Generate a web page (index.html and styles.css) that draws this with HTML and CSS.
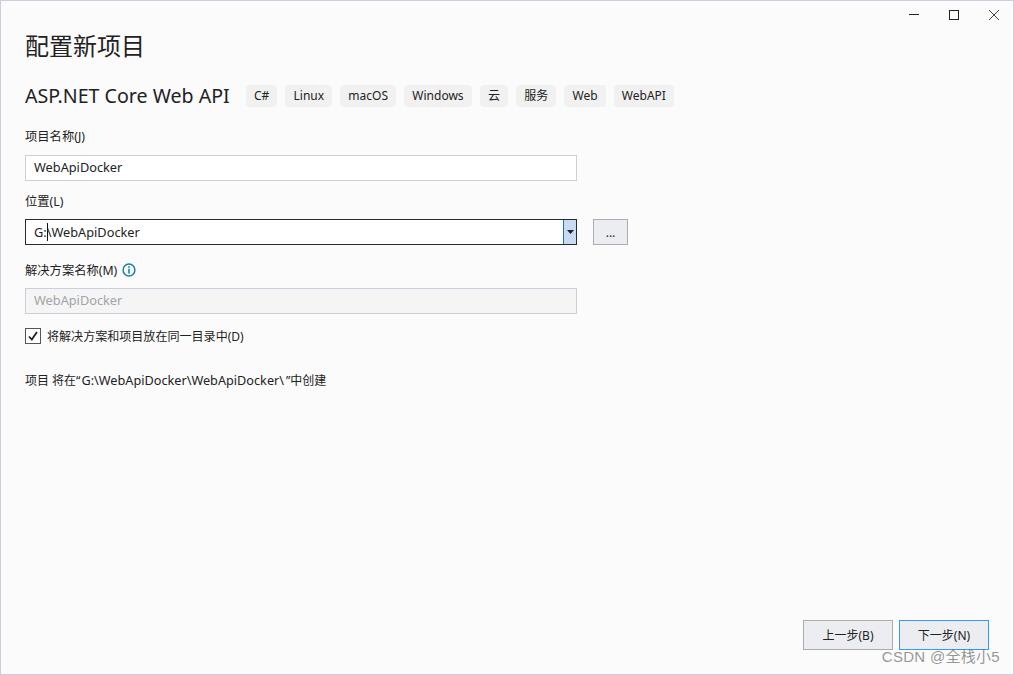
FILE: index.html
```html
<!DOCTYPE html>
<html lang="zh-CN">
<head>
    <meta charset="UTF-8">
    <meta name="viewport" content="width=device-width, initial-scale=1.0">
    <title>配置新项目</title>
    <link rel="stylesheet" href="styles.css">
</head>
<body>

    <div class="window">
        <div class="title-bar">
            <svg class="win-btn" width="40" height="30" viewBox="0 0 40 30"><path d="M16 13.500h10" stroke="#222" fill="none"/></svg>
            <svg class="win-btn" width="40" height="30" viewBox="0 0 40 30"><rect x="16.500" y="9.500" width="9" height="9" stroke="#222" fill="none"/></svg>
            <svg class="win-btn" width="40" height="30" viewBox="0 0 40 30"><path d="M16 9l10 10M26 9l-10 10" stroke="#444" fill="none"/></svg>
        </div>

        <h1>配置新项目</h1>

        <div class="template-row">
            <h2>ASP.NET Core Web API</h2>
            <ul class="tags">
                <li>C#</li>
                <li>Linux</li>
                <li>macOS</li>
                <li>Windows</li>
                <li>云</li>
                <li>服务</li>
                <li>Web</li>
                <li>WebAPI</li>
            </ul>
        </div>

        <label class="field-label">项目名称(J)</label>
        <div class="text-box">WebApiDocker</div>

        <label class="field-label location-label">位置(L)</label>
        <div class="location-row">
            <div class="text-box combo">
                <span class="combo-text">G:<span class="caret"></span>\WebApiDocker</span>
                <span class="combo-arrow"><svg width="7" height="4" viewBox="0 0 7 4"><path d="M0 0h7L3.500 4z" fill="#222"/></svg></span>
            </div>
            <button class="btn browse-btn" type="button">...</button>
        </div>

        <label class="field-label solution-label">解决方案名称(M)
            <svg class="info-icon" width="14" height="14" viewBox="0 0 14 14">
                <circle cx="7" cy="7" r="5.900" stroke="#1c7fa6" stroke-width="1.500" fill="none"/>
                <rect x="6.200" y="3.200" width="1.600" height="1.600" fill="#1c7fa6"/>
                <rect x="6.200" y="5.800" width="1.600" height="4.800" fill="#1c7fa6"/>
            </svg>
        </label>
        <div class="text-box disabled">WebApiDocker</div>

        <div class="check-row">
            <span class="check-box">
                <svg width="14" height="14" viewBox="0 0 14 14"><path d="M3 7.500l2.800 3L11 3" stroke="#222" stroke-width="1.800" fill="none"/></svg>
            </span>
            <span class="check-text">将解决方案和项目放在同一目录中(D)</span>
        </div>

        <p class="path-note">项目 将在“<span class="path-value">G:\WebApiDocker\WebApiDocker\</span>”中创建</p>

        <div class="footer">
            <button class="btn nav-btn" type="button">上一步(B)</button>
            <button class="btn nav-btn primary" type="button">下一步(N)</button>
        </div>

        <div class="watermark">CSDN @全栈小5</div>
    </div>

</body>
</html>
```

FILE: styles.css
```css
* {
    box-sizing: border-box;
}

html, body {
    margin: 0;
    height: 100%;
}

body {
    font-family: "Noto Sans", "Noto Sans CJK SC", sans-serif;
    font-size: 12px;
    color: #222;
    background-color: #fbfbfb;
}

.window {
    position: relative;
    display: flex;
    flex-direction: column;
    width: 1014px;
    height: 675px;
    padding: 0 24px 24px 24px;
    border: 1px solid #cccedf;
    background-color: #fbfbfb;
}

.title-bar {
    display: flex;
    justify-content: flex-end;
    height: 30px;
    margin-right: -24px;
}

.win-btn {
    display: block;
}

h1 {
    margin: 0;
    height: 30px;
    font-size: 24px;
    font-weight: 400;
    line-height: 30px;
}

.template-row {
    display: flex;
    align-items: center;
    height: 24px;
    margin-top: 23px;
}

h2 {
    margin: 0;
    font-size: 19.6px;
    font-weight: 400;
    line-height: 24px;
    white-space: nowrap;
}

.tags {
    display: flex;
    gap: 8px;
    margin: 0 0 0 16px;
    padding: 0;
    list-style: none;
}

.tags li {
    height: 22px;
    padding: 0 8.15px;
    line-height: 22px;
    background-color: #f1f1f1;
    border-radius: 4px;
}

.field-label {
    display: flex;
    align-items: center;
    height: 18px;
    margin-top: 19px;
    margin-bottom: 10px;
    font-size: 12.3px;
}

.location-label {
    margin-top: 11px;
    margin-bottom: 9px;
}

.solution-label {
    margin-top: 16px;
    margin-bottom: 9px;
}

.info-icon {
    margin-left: 5px;
}

.text-box {
    width: 552px;
    height: 26px;
    padding: 0 8px;
    font-size: 12.75px;
    line-height: 23px;
    background-color: #fff;
    border: 1px solid #cccedb;
}

.text-box.disabled {
    color: #a2a4a5;
    background-color: #f5f5f5;
}

.location-row {
    display: flex;
    gap: 16px;
}

.combo {
    display: flex;
    padding: 0 0 0 8px;
    line-height: 24px;
    border-color: #2b2b2b;
}

.combo-text {
    flex: 1;
}

.caret {
    display: inline-block;
    width: 1px;
    height: 18px;
    margin-right: -1px;
    vertical-align: -4px;
    background-color: #111;
}

.combo-arrow {
    display: flex;
    align-items: center;
    justify-content: center;
    width: 13px;
    background-color: #c7dcf3;
    border-left: 1px solid #1e73b8;
}

.btn {
    padding: 0;
    font-family: inherit;
    font-size: 12px;
    color: #222;
    background-color: #ecedf1;
    border: 1px solid #acacac;
}

.browse-btn {
    width: 35px;
    height: 26px;
}

.check-row {
    display: flex;
    align-items: center;
    gap: 6px;
    height: 16px;
    margin-top: 14px;
}

.check-text {
    font-size: 12.05px;
}

.check-box {
    display: flex;
    align-items: center;
    justify-content: center;
    width: 16px;
    height: 16px;
    background-color: #fff;
    border: 1px solid #555;
}

.path-note {
    height: 18px;
    margin: 27px 0 0 0;
    line-height: 18px;
}

.path-value {
    padding: 0 2px 0 1px;
    font-size: 12.7px;
}

.footer {
    display: flex;
    justify-content: flex-end;
    gap: 6px;
    margin-top: auto;
}

.nav-btn {
    width: 90px;
    height: 30px;
}

.nav-btn.primary {
    border-color: #3399ff;
}

.watermark {
    position: absolute;
    right: 13px;
    bottom: 8px;
    font-family: "Liberation Sans", "Noto Sans CJK SC", sans-serif;
    font-size: 15px;
    color: rgba(80, 80, 80, 0.6);
    letter-spacing: 0.3px;
}
```
